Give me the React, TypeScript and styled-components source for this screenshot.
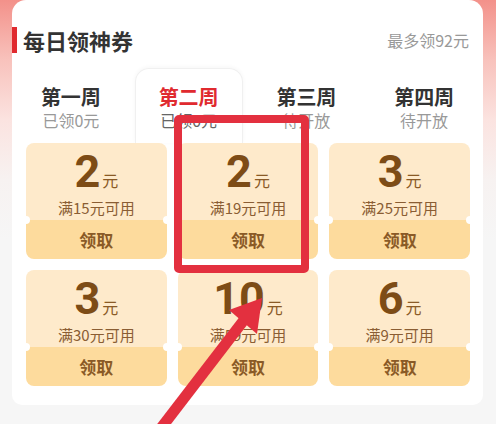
import styled, { createGlobalStyle } from "styled-components";

const GlobalStyle = createGlobalStyle`
  html, body {
    margin: 0;
    padding: 0;
  }
  body {
    font-family: "Noto Sans CJK SC", "Noto Sans", sans-serif;
    background: #f6f6f6;
  }
`;

type Week = {
  name: string;
  status: string;
};

type CouponData = {
  amount: number;
  limit: number;
};

const weeks: Week[] = [
  { name: "第一周", status: "已领0元" },
  { name: "第二周", status: "已领0元" },
  { name: "第三周", status: "待开放" },
  { name: "第四周", status: "待开放" },
];

const coupons: CouponData[] = [
  { amount: 2, limit: 15 },
  { amount: 2, limit: 19 },
  { amount: 3, limit: 25 },
  { amount: 3, limit: 30 },
  { amount: 10, limit: 59 },
  { amount: 6, limit: 9 },
];

function App() {
  return (
    <Page>
      <GlobalStyle />
      <Card>
        <Header>
          <Title>每日领神券</Title>
          <Max>最多领92元</Max>
        </Header>

        <Tabs>
          {weeks.map((w, i) => (
            <Tab key={w.name} $active={i === 1}>
              <TabName $active={i === 1}>{w.name}</TabName>
              <TabStatus $active={i === 1}>{w.status}</TabStatus>
            </Tab>
          ))}
        </Tabs>

        <Grid>
          {coupons.map((c, i) => (
            <Coupon key={i}>
              <Value>
                <Amount>
                  <Num>{c.amount}</Num>
                  <Unit>元</Unit>
                </Amount>
                <Cond>满{c.limit}元可用</Cond>
              </Value>
              <Claim>领取</Claim>
            </Coupon>
          ))}
        </Grid>
      </Card>

      {/* annotation drawn over the screenshot */}
      <Highlight />
      <Arrow viewBox="0 0 496 424">
        <line x1="244" y1="320" x2="158" y2="432" stroke="#e3303f" strokeWidth="11" />
        <polygon points="262,298 229,310 257,334" fill="#e3303f" />
      </Arrow>
    </Page>
  );
}

export default App;

const Page = styled.div`
  position: relative;
  height: 424px;
  overflow: hidden;
  background: linear-gradient(
    180deg,
    #f3918a 0px,
    #f8c2bc 60px,
    #fbe3e0 120px,
    #f7f2f1 180px,
    #f6f6f6 240px
  );
`;

const Card = styled.div`
  margin: 0 13px 0 12px;
  height: 405px;
  box-sizing: border-box;
  background: #fff;
  border-radius: 14px 14px 10px 10px;
  display: flex;
  flex-direction: column;
`;

const Header = styled.div`
  height: 68px;
  display: flex;
  align-items: center;
  justify-content: space-between;
  padding: 12px 14px 0 0;
  box-sizing: border-box;
`;

const Title = styled.div`
  display: flex;
  align-items: center;
  font-size: 22px;
  font-weight: 700;
  color: #333;
  line-height: 26px;

  &::before {
    content: "";
    width: 5px;
    height: 26px;
    background: #e02a2f;
    margin-right: 6px;
  }
`;

const Max = styled.div`
  font-size: 16px;
  color: #999;
  line-height: 20px;
`;

const Tabs = styled.div`
  display: grid;
  grid-template-columns: repeat(4, 1fr);
  height: 75px;
`;

const Tab = styled.div<{ $active?: boolean }>`
  margin: 0 5px;
  padding-top: 16px;
  box-sizing: border-box;
  display: flex;
  flex-direction: column;
  align-items: center;
  border-radius: 14px 14px 0 0;
  border: 1px solid ${(p) => (p.$active ? "#f0f0f0" : "transparent")};
  border-bottom: none;
  box-shadow: ${(p) => (p.$active ? "0 -1px 4px rgba(0, 0, 0, 0.04)" : "none")};
`;

const TabName = styled.div<{ $active?: boolean }>`
  font-size: 20px;
  font-weight: 700;
  line-height: 24px;
  color: ${(p) => (p.$active ? "#e02a2f" : "#333")};
`;

const TabStatus = styled.div<{ $active?: boolean }>`
  margin-top: 2px;
  font-size: 16px;
  line-height: 19px;
  color: ${(p) => (p.$active ? "#666" : "#999")};
`;

const Grid = styled.div`
  display: grid;
  grid-template-columns: repeat(3, 1fr);
  column-gap: 11px;
  row-gap: 11px;
  padding: 0 13px 0 14px;
`;

const Coupon = styled.div`
  border-radius: 8px;
  overflow: hidden;
  display: flex;
  flex-direction: column;
`;

const Value = styled.div`
  height: 77px;
  padding-top: 9px;
  box-sizing: border-box;
  background: #feeacb;
  display: flex;
  flex-direction: column;
  align-items: center;
`;

const Amount = styled.div`
  line-height: 40px;
  height: 40px;
  color: #7d4c16;
`;

const Num = styled.span`
  font-family: Roboto, "Noto Sans", sans-serif;
  font-size: 45px;
  font-weight: 700;
`;

const Unit = styled.span`
  margin-left: 2px;
  font-size: 16px;
  color: #8a5a26;
`;

const Cond = styled.div`
  margin-top: 6px;
  font-size: 15px;
  line-height: 20px;
  color: #8a5d33;
`;

const Claim = styled.div`
  position: relative;
  height: 39px;
  line-height: 39px;
  text-align: center;
  background: #fddb9d;
  font-size: 17px;
  font-weight: 700;
  color: #8a5a26;

  &::before,
  &::after {
    content: "";
    position: absolute;
    top: -4px;
    width: 8px;
    height: 8px;
    border-radius: 50%;
    background: #fff;
  }
  &::before {
    left: -4px;
  }
  &::after {
    right: -4px;
  }
`;

const Highlight = styled.div`
  position: absolute;
  left: 174px;
  top: 115px;
  width: 135px;
  height: 158px;
  box-sizing: border-box;
  border: 8px solid #e3303f;
  border-radius: 5px;
`;

const Arrow = styled.svg`
  position: absolute;
  left: 0;
  top: 0;
  width: 496px;
  height: 424px;
  pointer-events: none;
`;
